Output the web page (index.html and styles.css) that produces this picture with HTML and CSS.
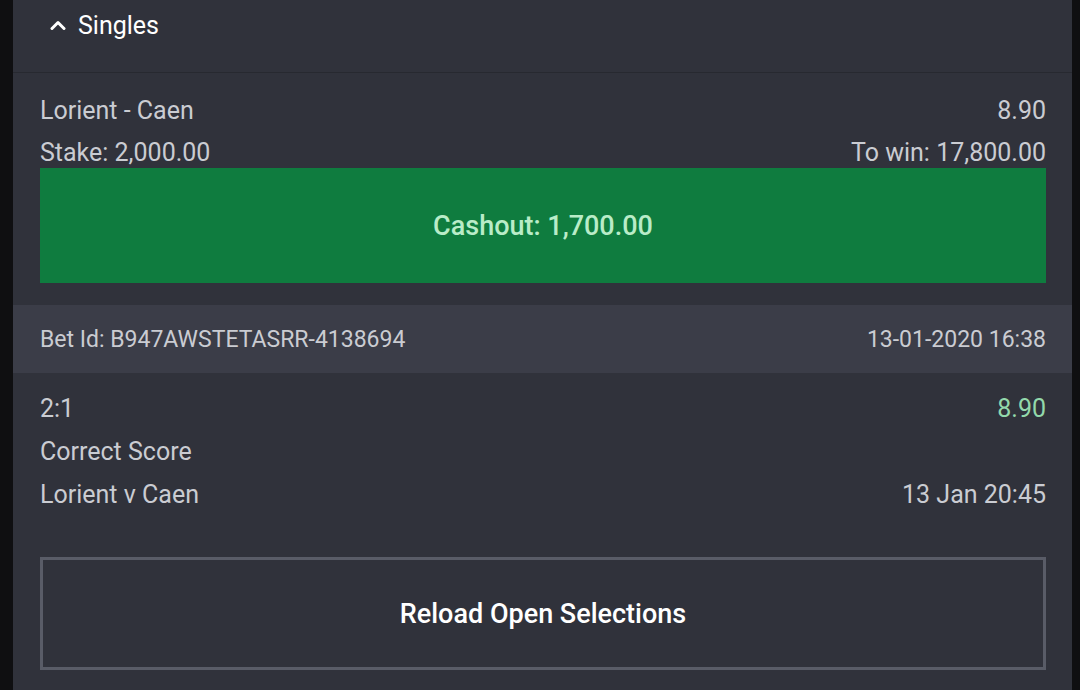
FILE: index.html
```html
<!DOCTYPE html>
<html>
<head>
<meta charset="utf-8">
<link rel="stylesheet" href="styles.css">
</head>
<body>
<div class="panel">
  <div class="header">
    <svg class="chev" width="16" height="12" viewBox="0 0 16 12"><path d="M2 9.5 L8 3.5 L14 9.5" fill="none" stroke="#ffffff" stroke-width="3" stroke-linecap="round" stroke-linejoin="round"/></svg>
    <span class="title">Singles</span>
  </div>
  <div class="bet">
    <div class="row r1"><span>Lorient - Caen</span><span>8.90</span></div>
    <div class="row r2"><span>Stake: 2,000.00</span><span>To win: 17,800.00</span></div>
    <div class="cashout">Cashout: 1,700.00</div>
  </div>
  <div class="betid"><span>Bet Id: B947AWSTETASRR-4138694</span><span>13-01-2020 16:38</span></div>
  <div class="sel">
    <div class="row srow"><span>2:1</span><span class="odds">8.90</span></div>
    <div class="row srow"><span>Correct Score</span></div>
    <div class="row srow"><span>Lorient v Caen</span><span>13 Jan 20:45</span></div>
    <div class="reload">Reload Open Selections</div>
  </div>
</div>
</body>
</html>
```

FILE: styles.css
```css
html, body {
  margin: 0;
  padding: 0;
  background: #0f0f11;
  height: 690px;
  overflow: hidden;
}
body {
  font-family: Roboto, "Liberation Sans", sans-serif;
}
.panel {
  margin: 0 8px 0 13px;
  background: #30323b;
  height: 690px;
  color: #caccd2;
}
.header {
  height: 73px;
  border-bottom: 1px solid #272930;
  display: flex;
  align-items: flex-start;
  padding-left: 37px;
  box-sizing: border-box;
}
.chev {
  margin-top: 19px;
  margin-right: 12px;
}
.title {
  color: #ffffff;
  font-size: 25px;
  line-height: 51px;
}
.bet {
  padding: 19px 26px 0 27px;
}
.row {
  display: flex;
  justify-content: space-between;
  align-items: center;
  font-size: 25px;
}
.r1 { height: 36px; }
.r2 { height: 32px; margin-top: 8px; }
.cashout {
  height: 115px;
  background: #0f7c3f;
  color: #b9ecc8;
  font-weight: 500;
  font-size: 27px;
  display: flex;
  align-items: center;
  justify-content: center;
}
.betid {
  margin-top: 22px;
  height: 68px;
  background: #3b3d48;
  display: flex;
  justify-content: space-between;
  align-items: center;
  padding: 0 26px 0 27px;
  font-size: 23px;
}
.sel {
  padding: 14px 26px 0 27px;
}
.srow { height: 43px; }
.odds { color: #93d9ab; }
.reload {
  margin-top: 41px;
  height: 113px;
  box-sizing: border-box;
  border: 3px solid #595c67;
  color: #ffffff;
  font-weight: 500;
  font-size: 27px;
  display: flex;
  align-items: center;
  justify-content: center;
}
```
